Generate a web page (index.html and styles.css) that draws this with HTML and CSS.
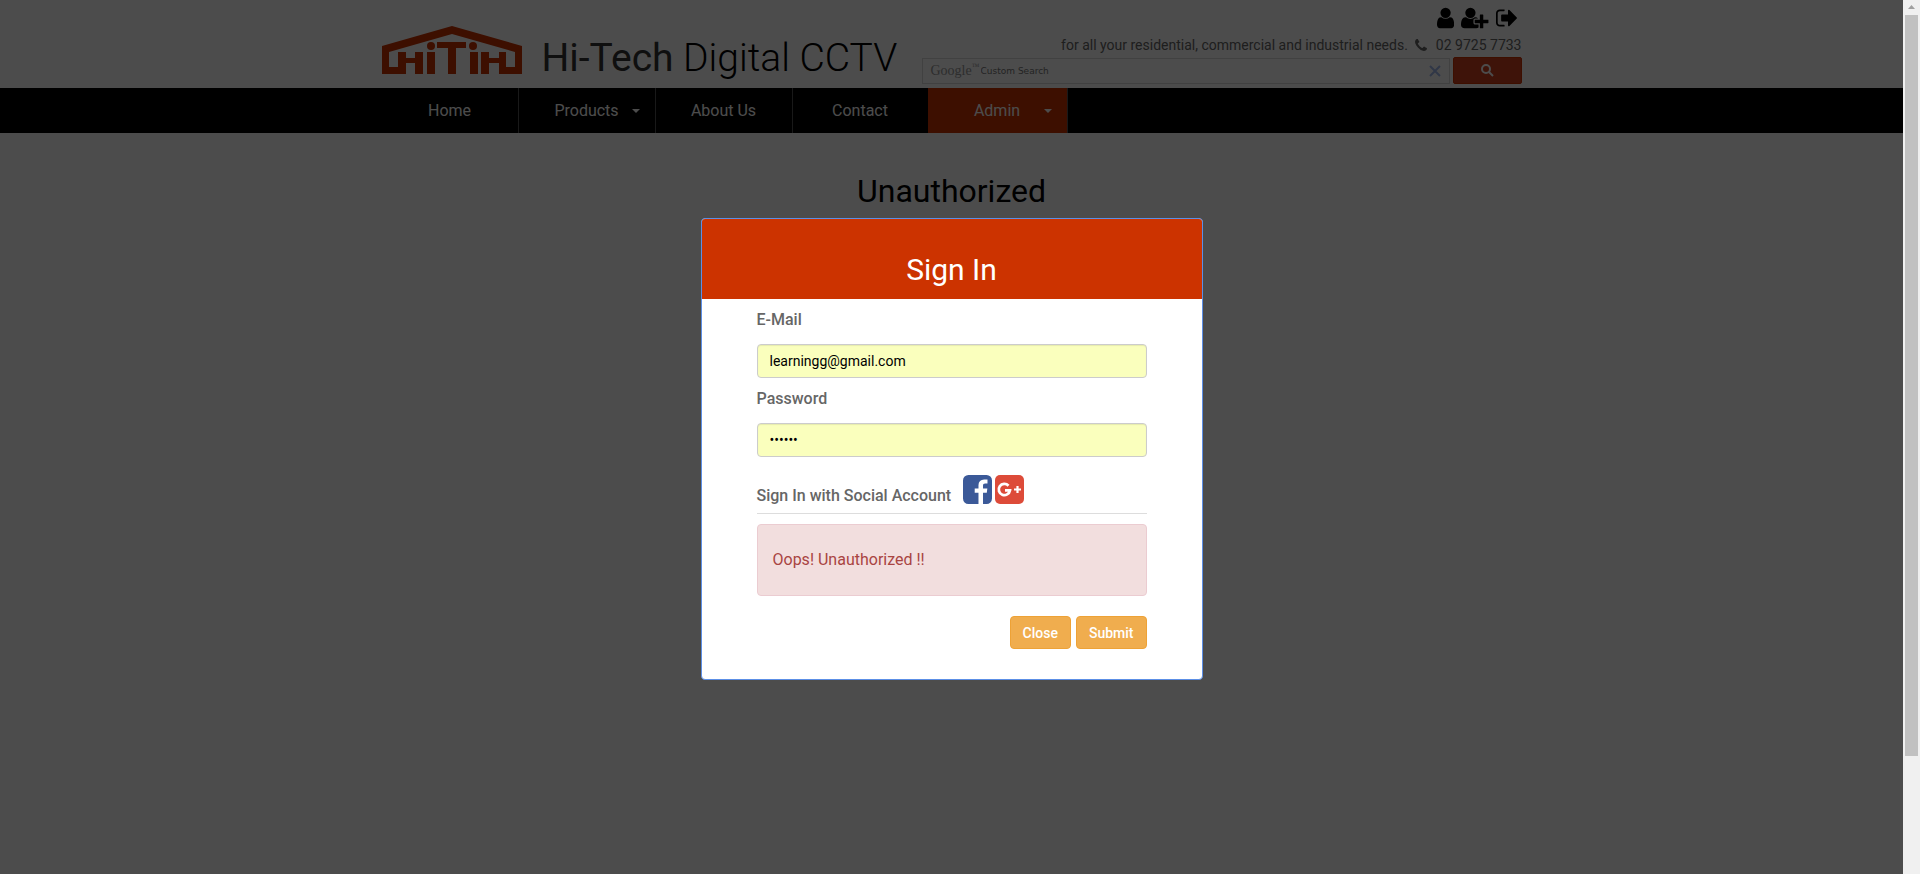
FILE: index.html
```html
<!DOCTYPE html>
<html lang="en">
<head>
<meta charset="utf-8">
<title>Unauthorized - Hi-Tech Digital CCTV</title>
<link rel="stylesheet" href="styles.css">
</head>
<body>
<div class="page">
  <header class="container header">
    <a class="brand" href="#">
      <svg class="logo" viewBox="0 0 140 48" aria-label="HiTiH">
        <path fill-rule="evenodd" d="M70 0 140 20V48H117V37H107V48H99V26H107V32H117V26H124V41H133V26L70 8 7 26V41H16V26H24V32H33V26H41V48H33V37H24V48H0V20Z"/>
        <path d="M55 16H84V22H74V48H66V22H55ZM45 26H53V48H45ZM88 26H96V48H88Z"/>
        <circle cx="49" cy="20" r="4"/><circle cx="91" cy="20" r="4"/>
      </svg>
      <span class="brand-name"><span class="brand-strong">Hi-Tech</span> Digital CCTV</span>
    </a>
    <div class="tools">
      <div class="account">
        <a href="#" aria-label="Account"><svg class="icon" viewBox="0 0 1280 1792"><path d="M1280 1399q0 109-62.500 187t-150.500 78h-854q-88 0-150.500-78t-62.500-187q0-85 8.500-160.500t31.500-152 58.500-131 94-89 134.500-34.500q131 128 313 128t313-128q76 0 134.500 34.500t94 89 58.500 131 31.500 152 8.500 160.500zm-256-887q0 159-112.500 271.500t-271.500 112.500-271.500-112.500-112.500-271.500 112.500-271.500 271.500-112.500 271.500 112.500 112.500 271.500z"/></svg></a>
        <a href="#" aria-label="Register"><svg class="icon" viewBox="0 0 2048 1792"><path d="M704 896q-159 0-271.500-112.500t-112.500-271.500 112.500-271.500 271.500-112.500 271.500 112.500 112.500 271.500-112.500 271.500-271.500 112.500zm960 128h352q13 0 22.500 9.500t9.500 22.500v192q0 13-9.500 22.500t-22.500 9.500h-352v352q0 13-9.500 22.500t-22.500 9.500h-192q-13 0-22.500-9.500t-9.500-22.500v-352h-352q-13 0-22.500-9.500t-9.500-22.500v-192q0-13 9.500-22.500t22.500-9.500h352v-352q0-13 9.500-22.500t22.500-9.500h192q13 0 22.500 9.500t9.500 22.500v352zm-736 224q0 52 38 90t90 38h256v238q-68 50-171 50h-874q-121 0-194-69t-73-190q0-53 3.500-103.500t14-109 26.500-108.500 43-97.500 62-81 85.500-53.500 111.500-20q19 0 39 17 79 61 154.500 91.500t164.500 30.500 164.500-30.500 154.500-91.500q20-17 39-17 132 0 217 96h-223q-52 0-90 38t-38 90v192z"/></svg></a>
        <a href="#" aria-label="Sign out"><svg class="icon" viewBox="0 0 1568 1792"><path d="M640 1440q0 4 1 20t.5 26.500-3 23.500-10 19.500-20.500 6.500h-320q-119 0-203.500-84.500t-84.500-203.500v-704q0-119 84.500-203.500t203.500-84.500h320q13 0 22.500 9.500t9.500 22.500q0 4 1 20t.5 26.500-3 23.500-10 19.500-20.500 6.500h-320q-66 0-113 47t-47 113v704q0 66 47 113t113 47h312l11.500 1 11.500 3 8 5.500 7 9 2 13.500zm928-544q0 26-19 45l-544 544q-19 19-45 19t-45-19-19-45v-288h-448q-26 0-45-19t-19-45v-384q0-26 19-45t45-19h448v-288q0-26 19-45t45-19 45 19l544 544q19 19 19 45z"/></svg></a>
      </div>
      <p class="tagline">
        <span>for all your residential, commercial and industrial needs.</span>
        <svg class="phone" viewBox="0 128 1408 1536"><path d="M1408 1240q0 27-10 70.500t-21 68.500q-21 50-122 106-94 51-186 51-27 0-53-3.500t-57.500-12.500-47-14.500-55.500-20.500-49-18q-98-35-175-83-127-79-264-216t-216-264q-48-77-83-175-3-9-18-49t-20.500-55.500-14.500-47-12.500-57.500-3.500-53q0-92 51-186 56-101 106-122 25-11 68.500-21t70.500-10q14 0 21 3 18 6 53 76 11 19 30 54t35 63.500 31 53.500q3 4 17.500 25t21.500 35.500 7 28.500q0 20-28.500 50t-62 55-62 53-28.500 46q0 9 5 22.500t8.500 20.500 14 24 11.500 19q76 137 174 235t235 174q2 1 19 11.500t24 14 20.500 8.500 22.500 5q18 0 46-28.500t53-62 55-62 50-28.500q14 0 28.500 7t35.500 21.500 25 17.500q25 15 53.500 31t63.500 35 54 30q70 35 76 53 3 7 3 21z"/></svg>
        <span class="number">02 9725 7733</span>
      </p>
      <form class="search">
        <label class="search-box">
          <span class="google">Google<sup>™</sup></span>
          <input class="search-input" type="text" placeholder="Custom Search" aria-label="Custom Search">
          <svg class="clear" viewBox="0 0 12 12"><path d="M1 1 11 11M11 1 1 11"/></svg>
        </label>
        <button class="search-button" type="button" aria-label="Search"><svg class="magnifier" viewBox="0 0 13 13"><circle cx="5" cy="5" r="4"/><path d="M8 8 12 12"/></svg></button>
      </form>
    </div>
  </header>
  <nav class="nav">
    <div class="container menu">
      <a class="item" href="#">Home</a>
      <a class="item has-caret" href="#">Products</a>
      <a class="item" href="#">About Us</a>
      <a class="item last-plain" href="#">Contact</a>
      <a class="item has-caret active" href="#">Admin</a>
    </div>
  </nav>
  <main class="container">
    <h1 class="page-title">Unauthorized</h1>
  </main>
  <div class="overlay">
    <form class="modal" role="dialog" aria-labelledby="signin-title">
      <h2 class="modal-title" id="signin-title">Sign In</h2>
      <div class="modal-body">
        <label class="label" for="email">E-Mail</label>
        <input class="field" id="email" type="email" value="learningg@gmail.com">
        <label class="label" for="password">Password</label>
        <input class="field" id="password" type="password" value="secret">
        <div class="social">
          <span class="social-text">Sign In with Social Account</span>
          <a class="social-link" href="#" aria-label="Facebook"><svg class="social-icon facebook" viewBox="0 128 1536 1536"><path d="M1248 128q119 0 203.500 84.500t84.500 203.500v960q0 119-84.500 203.500t-203.500 84.500h-188v-595h199l30-232h-229v-148q0-56 23.500-84t91.500-28l122-1v-207q-63-9-178-9-136 0-217.500 80t-81.500 226v171h-200v232h200v595h-532q-119 0-203.500-84.500t-84.500-203.500v-960q0-119 84.500-203.500t203.500-84.500h960z"/></svg></a>
          <a class="social-link" href="#" aria-label="Google Plus"><svg class="social-icon" viewBox="0 0 29 29"><rect width="29" height="29" rx="5" fill="#dd4b39"/><path d="M13.500 10.700A5.600 5.600 0 1 0 14.900 15.400H10" fill="none" stroke="#fff" stroke-width="2.800"/><path d="M19 14.500H26M22.500 11V18" stroke="#fff" stroke-width="2.200"/></svg></a>
        </div>
        <p class="alert">Oops! Unauthorized !!</p>
        <div class="actions">
          <button class="button" type="button">Close</button>
          <button class="button" type="button">Submit</button>
        </div>
      </div>
    </form>
  </div>
</div>
<div class="scrollbar" aria-hidden="true">
  <svg class="arrow" viewBox="0 0 7 4"><path d="M0 4 3.500 0 7 4Z"/></svg>
  <div class="thumb"></div>
</div>
</body>
</html>
```
FILE: styles.css
```css
* { box-sizing: border-box; }

body {
  margin: 0;
  display: flex;
  min-height: 100vh;
  font-family: Roboto, sans-serif;
  font-size: 14px;
  line-height: 20px;
  color: #666;
  background: #fff;
}

a { color: inherit; text-decoration: none; }
p, h1, h2 { margin: 0; }
svg { display: block; }

.page { position: relative; flex: 1; }
.container { max-width: 1140px; margin: 0 auto; }

.header {
  display: flex;
  justify-content: space-between;
  height: 88px;
}
.brand { display: flex; align-items: flex-start; gap: 20px; padding-top: 26px; }
.logo { width: 140px; height: 48px; fill: #c30; }
.brand-name {
  padding-top: 8px;
  font-size: 39px;
  font-weight: 300;
  line-height: 48px;
  color: #000;
  white-space: nowrap;
}
.brand-strong { font-weight: 400; color: #333; }

.tools { width: 600px; padding-top: 6px; }
.account { display: flex; justify-content: flex-end; gap: 7px; padding-right: 5px; color: #000; }
.icon { height: 24px; fill: currentColor; }
.tagline { display: flex; justify-content: flex-end; align-items: center; padding-top: 5px; white-space: nowrap; }
.phone { width: 12px; height: 13px; margin: 0 9px 0 7px; fill: currentColor; }
.search { display: flex; align-items: center; gap: 3px; padding-top: 2px; }
.search-box {
  display: flex;
  align-items: center;
  flex: 1;
  height: 26px;
  padding: 0 8px;
  border: 1px solid #d9d9d9;
}
.google { font-family: "Liberation Serif", serif; font-size: 14px; color: #999; }
.google sup { font-size: 8px; line-height: 8px; }
.search-input {
  flex: 1;
  padding: 0 0 0 1px;
  border: 0;
  outline: 0;
  background: none;
  font-family: "DejaVu Sans", sans-serif;
  font-size: 9px;
}
.search-input::placeholder { color: #777; opacity: 1; }
.clear { width: 12px; height: 12px; stroke: #a1b9ed; stroke-width: 2; }
.search-button {
  display: grid;
  place-items: center;
  width: 69px;
  height: 27px;
  padding: 0;
  border: 1px solid #c30;
  border-radius: 2px;
  background: #d14020;
}
.magnifier { width: 13px; height: 13px; fill: none; stroke: #fff; stroke-width: 2; }

.nav { background: #000; }
.menu { display: flex; }
.item {
  position: relative;
  width: 137px;
  height: 45px;
  border-right: 1px solid #555;
  font-size: 16px;
  line-height: 45px;
  text-align: center;
  color: #fff;
}
.last-plain { width: 135px; border-right: 0; }
.active { width: 140px; background: #c30; }
.has-caret::after {
  content: "";
  position: absolute;
  top: 21px;
  right: 15px;
  border: 4px solid transparent;
  border-top-color: currentColor;
  border-bottom: 0;
}

.page-title {
  padding-top: 38px;
  font-size: 32px;
  font-weight: 400;
  line-height: 40px;
  text-align: center;
  color: #000;
}

.overlay {
  position: absolute;
  inset: 0;
  padding-top: 218px;
  background: rgba(0, 0, 0, 0.7);
}
.modal {
  max-width: 502px;
  margin: 0 auto;
  border: 1px solid #5c8fe6;
  border-radius: 4px;
  background: #fff;
  overflow: hidden;
}
.modal-title {
  padding: 33px 0 11px;
  font-size: 30px;
  font-weight: 400;
  line-height: 36px;
  text-align: center;
  color: #fff;
  background: #c30;
}
.modal-body { padding: 8px 55px 30px; }
.label { display: block; padding-bottom: 12px; font-size: 16px; font-weight: 500; line-height: 25px; }
.field {
  display: block;
  width: 100%;
  height: 34px;
  margin-bottom: 8px;
  padding: 0 12px;
  border: 1px solid #ccc;
  border-radius: 4px;
  outline: 0;
  background: #faffbd;
  box-shadow: inset 0 1px 1px rgba(0, 0, 0, 0.08);
  font: inherit;
  color: #000;
}
.social {
  display: flex;
  padding: 10px 0 5px;
  border-bottom: 1px solid #ddd;
}
.social-text { padding: 9px 12px 0 0; font-size: 16px; font-weight: 500; line-height: 24px; }
.social-link { height: 29px; margin-right: 3px; }
.social-icon { width: 29px; height: 29px; }
.facebook { fill: #3b5998; }
.alert {
  margin-top: 10px;
  padding: 23px 15px;
  border: 1px solid #ebccd1;
  border-radius: 4px;
  background: #f2dede;
  font-size: 16px;
  line-height: 24px;
  color: #a94442;
}
.actions { display: flex; justify-content: flex-end; gap: 5px; padding-top: 20px; }
.button {
  height: 33px;
  padding: 0 12px;
  border: 1px solid #eea236;
  border-radius: 4px;
  background: #f0ad4e;
  font: inherit;
  font-weight: 500;
  color: #fff;
}

.scrollbar { width: 17px; padding: 5px 2px 0; background: #f0f0f0; }
.arrow { width: 7px; height: 4px; margin: 0 auto 6px; fill: #a0a0a0; }
.thumb { height: 741px; background: #c1c1c1; }
```
